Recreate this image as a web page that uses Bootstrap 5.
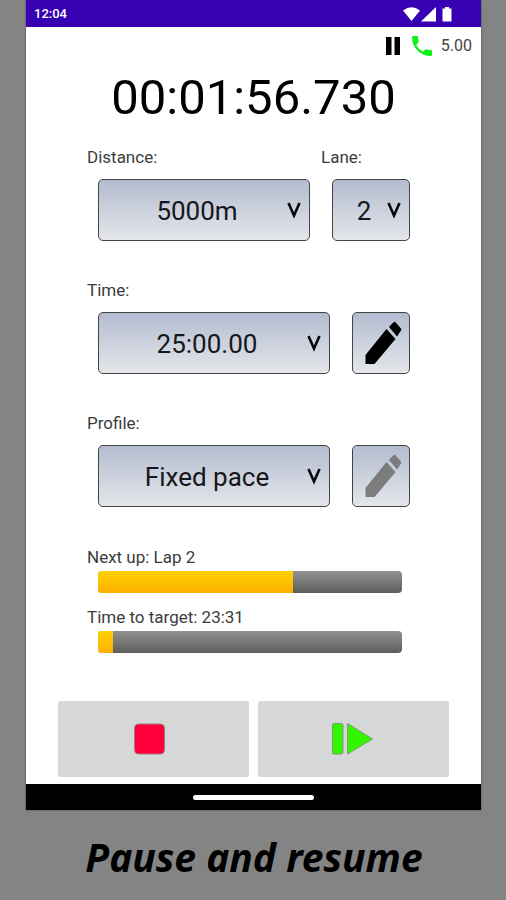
<!DOCTYPE html>
<html lang="en">
<head>
<meta charset="utf-8">
<meta name="viewport" content="width=device-width, initial-scale=1">
<title>Pause and resume</title>
<link href="https://cdn.jsdelivr.net/npm/bootstrap@5.3.0/dist/css/bootstrap.min.css" rel="stylesheet">
<style>
  body { background: #848484; color: #000; font-family: Roboto, sans-serif; }
  .phone { margin: 0 25px 0 26px; background: #fff; box-shadow: 0 0 2px #444; }
  .status-bar { background: #3700b3; height: 27px; padding: 1px 27px 0 8px; font-size: 13px; font-weight: 500; }
  .info-row { height: 37px; padding: 0 9px; font-size: 16px; color: #444; }
  .timer { font-size: 49px; line-height: 68px; }
  .panel { padding: 13px 71px 0 61px; }
  .field-row { margin-bottom: 37px; }
  .field-row:nth-child(3) { margin-bottom: 38px; }
  .field-label { font-size: 17px; line-height: 24px; color: #3c3c3c; }
  .control-line { padding-left: 11px; margin-top: 10px; gap: 22px; }
  .lane-col { width: 89px; margin-left: 11px; }
  .steel { height: 62px; border: 1px solid #444; border-radius: 5px; background: linear-gradient(#b3bccf, #e4e6ea); }
  .steel-select {
    appearance: none; color: #15171c; font-size: 26px; text-align: center; padding: 2px 26px 0 12px;
    background: url("data:image/svg+xml,%3Csvg xmlns='http://www.w3.org/2000/svg' viewBox='0 0 14 18'%3E%3Cpath d='M1.500 2L7 14.500L12.500 2' fill='none' stroke='%23080808' stroke-width='2.6'/%3E%3C/svg%3E") right 8px center / 14px 18px no-repeat, linear-gradient(#b3bccf, #e4e6ea);
  }
  .edit-btn { width: 58px; }
  .gauge { height: 22px; margin: 2px 8px 11px 11px; border-radius: 4px; background: linear-gradient(#929292, #5c5e5b); }
  .gauge .progress-bar { background: linear-gradient(#ffd000, #ffb000); }
  .target-label { padding-top: 1px; }
  .action-row { padding: 48px 32px 7px; gap: 9px; }
  .action-btn { height: 76px; border-radius: 2px; background: #d6d7d7; }
  .nav-strip { height: 26px; background: #000; }
  .home-pill { width: 121px; height: 5px; border-radius: 3px; background: #fff; }
  .caption { font-family: "Noto Sans", sans-serif; font-size: 39px; line-height: 52px; padding: 21px 0 0 2px; }
</style>
</head>
<body>
<main class="phone">
  <div class="status-bar d-flex align-items-center justify-content-between text-white">
    <span>12:04</span>
    <svg width="52" height="16" viewBox="0 0 52 16" fill="#fff" aria-hidden="true">
      <path d="M1 4.500Q9.500-2 18 4.500L9.500 15z"/>
      <path d="M34 1V15.500H19z"/>
      <path d="M43 1h4v1.500h2.500V15.500h-9V2.500H43z"/>
    </svg>
  </div>
  <div class="info-row d-flex align-items-center justify-content-end">
    <svg class="me-2" width="20" height="20" viewBox="0 0 20 20" aria-hidden="true"><path d="M3 1h5.500v18H3zM11.500 1H17v18h-5.500z"/></svg>
    <svg class="me-2" width="22" height="22" viewBox="0 0 22 22" aria-hidden="true"><path fill="#0df21a" d="M1 2Q1 1 2 1H6Q7 1 7 2Q7 4.500 7.700 6.400Q7.900 7.200 7.400 7.700L5.200 9.900Q7.700 14.300 12.100 16.800L14.300 14.600Q14.800 14.100 15.600 14.300Q17.500 15 20 15Q21 15 21 16V20Q21 21 20 21Q12 21 6.500 15.500Q1 10 1 2z"/></svg>
    <span>5.00</span>
  </div>
  <div class="timer text-center">00:01:56.730</div>

  <form class="panel">
    <div class="field-row d-flex">
      <div class="flex-grow-1">
        <label class="field-label d-block" for="distance">Distance:</label>
        <div class="control-line d-flex"><select class="steel steel-select w-100" id="distance"><option>5000m</option></select></div>
      </div>
      <div class="lane-col flex-shrink-0">
        <label class="field-label d-block" for="lane">Lane:</label>
        <div class="control-line d-flex"><select class="steel steel-select w-100" id="lane"><option>2</option></select></div>
      </div>
    </div>
    <div class="field-row">
      <label class="field-label d-block" for="time">Time:</label>
      <div class="control-line d-flex">
        <select class="steel steel-select flex-grow-1" id="time"><option>25:00.00</option></select>
        <button type="button" class="steel edit-btn p-0" aria-label="Edit time">
          <svg width="42" height="46" viewBox="0 0 42 46" aria-hidden="true"><path d="M5.500 35L26.500 9L35.500 19L14.500 44H5.500zM29 7L33.500 2.200Q34.500 1.200 35.500 2.200L41 8.500Q41.700 9.500 41 10.500L37 16.500z"/></svg>
        </button>
      </div>
    </div>
    <div class="field-row">
      <label class="field-label d-block" for="profile">Profile:</label>
      <div class="control-line d-flex">
        <select class="steel steel-select flex-grow-1" id="profile"><option>Fixed pace</option></select>
        <button type="button" class="steel edit-btn p-0" aria-label="Edit profile">
          <svg width="42" height="46" viewBox="0 0 42 46" fill="#7c7c7c" aria-hidden="true"><path d="M5.500 35L26.500 9L35.500 19L14.500 44H5.500zM29 7L33.500 2.200Q34.500 1.200 35.500 2.200L41 8.500Q41.700 9.500 41 10.500L37 16.500z"/></svg>
        </button>
      </div>
    </div>
    <div class="field-label" id="next">Next up: Lap 2</div>
    <div class="progress gauge" role="progressbar" aria-labelledby="next" aria-valuenow="64" aria-valuemin="0" aria-valuemax="100"><div class="progress-bar" style="width:64%"></div></div>
    <div class="field-label target-label" id="target">Time to target: 23:31</div>
    <div class="progress gauge mb-0" role="progressbar" aria-labelledby="target" aria-valuenow="5" aria-valuemin="0" aria-valuemax="100"><div class="progress-bar" style="width:5%"></div></div>
  </form>

  <div class="action-row d-flex">
    <button type="button" class="action-btn border-0 flex-fill" aria-label="Stop">
      <svg width="44" height="34" viewBox="0 0 44 34" aria-hidden="true"><rect x="2.500" y="2" width="30" height="30" rx="4" fill="#ff003c" stroke="#a8787f" stroke-width="1"/></svg>
    </button>
    <button type="button" class="action-btn border-0 flex-fill" aria-label="Resume">
      <svg width="44" height="34" viewBox="0 0 44 34" fill="#33f500" stroke="#7c9c74" stroke-width="1" aria-hidden="true"><rect x=".5" y="1.500" width="10.500" height="30.500" rx="1.500"/><path d="M15.500 1.500L40.500 17L15.500 32z" stroke-linejoin="round"/></svg>
    </button>
  </div>
  <div class="nav-strip d-flex align-items-center justify-content-center"><div class="home-pill"></div></div>
</main>
<h1 class="caption text-center fw-bold fst-italic mb-0">Pause and resume</h1>
<script src="https://cdn.jsdelivr.net/npm/bootstrap@5.3.0/dist/js/bootstrap.bundle.min.js"></script>
</body>
</html>
